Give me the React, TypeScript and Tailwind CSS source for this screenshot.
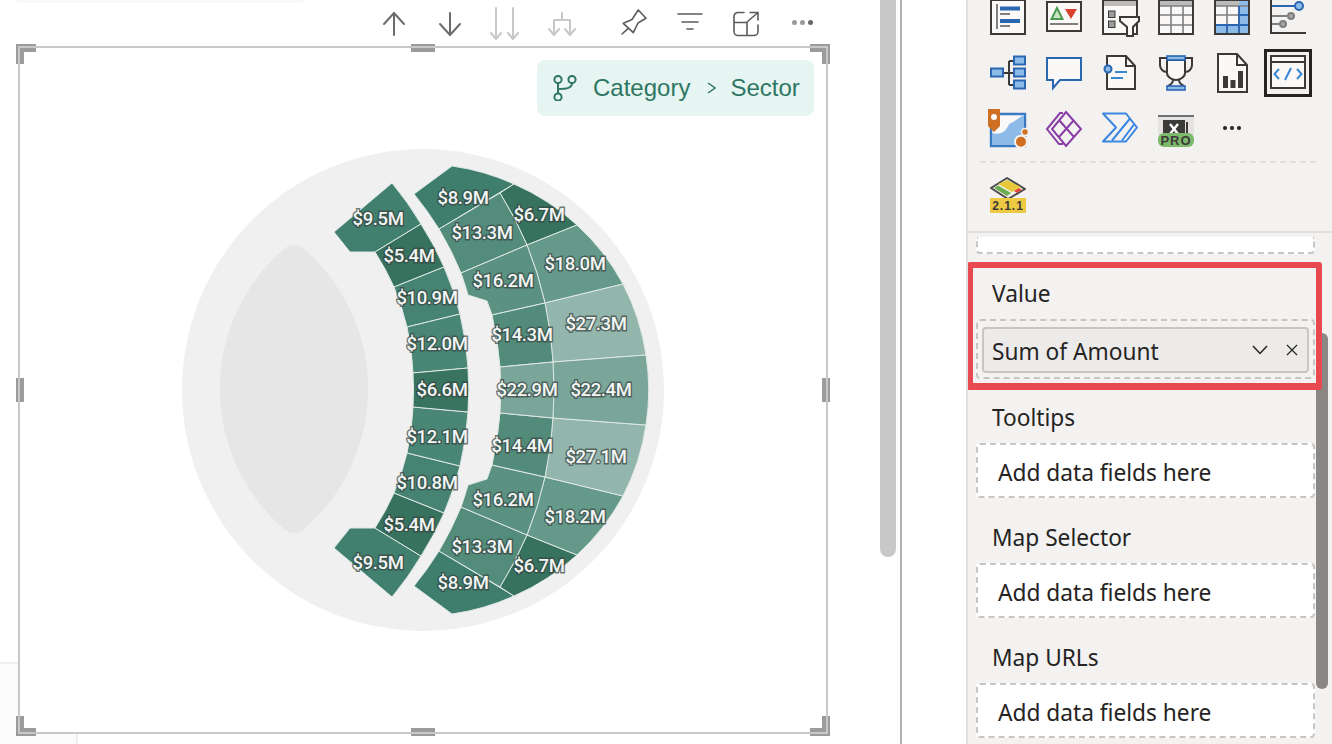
const SANS = 'font-["Noto_Sans",sans-serif]';

type Segment = { d: string; fill: string };

// top half of the chart, the lower half is the same paths mirrored around y=390
const mirrored: Segment[] = [
  { d: 'M414 194 L452 166 A226 226 0 0 1 514 184 L439 229 A328 328 0 0 0 414 194 Z', fill: '#3f7d6c' },
  { d: 'M500 193 L514 184 A226 226 0 0 1 577 225 L527 245 A386 386 0 0 0 500 193 Z', fill: '#37725f' },
  { d: 'M439 229 L500 193 A386 386 0 0 1 527 245 L461 273 A328 328 0 0 0 439 229 Z', fill: '#548c7c' },
  { d: 'M527 245 L577 225 A226 226 0 0 1 623 284 L545 303 A386 386 0 0 0 527 245 Z', fill: '#659a8b' },
  { d: 'M461 273 L527 245 A386 386 0 0 1 545 303 L492 315 L487 301 L468 295 A328 328 0 0 0 461 273 Z', fill: '#5a9181' },
  { d: 'M545 303 L623 284 A226 226 0 0 1 646 355 L553 362 A386 386 0 0 0 545 303 Z', fill: '#92b5ac' },
  { d: 'M492 315 L545 303 A386 386 0 0 1 553 362 L500 367 A350 350 0 0 0 492 315 Z', fill: '#528b7a' },
  { d: 'M334 232 L392 183 A317 317 0 0 1 421 224 L375 252 L350 252 Z', fill: '#417f6e' },
  { d: 'M375 252 L421 224 A317 317 0 0 1 444 267 L394 287 A264 264 0 0 0 375 252 Z', fill: '#37725f' },
  { d: 'M394 287 L444 267 A317 317 0 0 1 460 314 L407 327 A264 264 0 0 0 394 287 Z', fill: '#468372' },
  { d: 'M407 327 L460 314 A317 317 0 0 1 468 368 L413 373 A264 264 0 0 0 407 327 Z', fill: '#4a8675' },
];

const middle: Segment[] = [
  { d: 'M553 362 L646 355 A226 226 0 0 1 646 425 L553 418 A386 386 0 0 1 553 362 Z', fill: '#7aa69a' },
  { d: 'M500 367 L553 362 A386 386 0 0 1 553 418 L500 413 A350 350 0 0 0 500 367 Z', fill: '#7aa69a' },
  { d: 'M413 373 L468 368 A317 317 0 0 1 468 412 L413 407 A264 264 0 0 0 413 373 Z', fill: '#38745f' },
];

const labels: [string, number, number][] = [
  ['$8.9M', 463, 197], ['$6.7M', 539, 214], ['$13.3M', 482, 232], ['$18.0M', 575, 263],
  ['$16.2M', 503, 280], ['$27.3M', 596, 323], ['$14.3M', 522, 334], ['$22.9M', 527, 389],
  ['$22.4M', 601, 389], ['$14.4M', 522, 445], ['$27.1M', 596, 456], ['$16.2M', 503, 499],
  ['$18.2M', 575, 516], ['$13.3M', 482, 546], ['$6.7M', 539, 565], ['$8.9M', 463, 582],
  ['$9.5M', 378, 218], ['$5.4M', 409, 255], ['$10.9M', 427, 297], ['$12.0M', 437, 343],
  ['$6.6M', 442, 389], ['$12.1M', 437, 436], ['$10.8M', 427, 482], ['$5.4M', 409, 524],
  ['$9.5M', 378, 562],
];

const Chart = () => (
  <svg viewBox="182 149 482 482" className="mx-auto mt-[33px] h-[482px] w-[482px]">
    <circle cx="423" cy="390" r="241" fill="#f0f0f0" />
    <path
      d="M294 260 A170.5 170.5 0 0 1 294 518 A170.5 170.5 0 0 1 294 260 Z"
      fill="#e6e6e6"
      stroke="#e6e6e6"
      strokeWidth="30"
      strokeLinejoin="round"
    />
    <g stroke="#dfe9e6" strokeWidth="1">
      {mirrored.map((s) => (
        <path key={s.d} d={s.d} fill={s.fill} />
      ))}
      <g transform="matrix(1 0 0 -1 0 780)">
        {mirrored.map((s) => (
          <path key={s.d} d={s.d} fill={s.fill} />
        ))}
      </g>
      {middle.map((s) => (
        <path key={s.d} d={s.d} fill={s.fill} />
      ))}
    </g>
    {labels.map(([text, x, y]) => (
      <text
        key={`${text}-${x}-${y}`}
        x={x}
        y={y + 0.5}
        textAnchor="middle"
        dominantBaseline="central"
        fill="#f2f5f4"
        stroke="#36423e"
        strokeWidth="2.8"
        strokeOpacity="0.7"
        className='font-["Roboto",sans-serif] text-[18.5px] font-medium tracking-[-0.4px] [paint-order:stroke]'
      >
        {text}
      </text>
    ))}
  </svg>
);

const ToolIcon = ({ children, stroke = '#6b6b6b', width = 2 }: { children: React.ReactNode; stroke?: string; width?: number }) => (
  <div className="flex h-full w-14 items-center justify-center">
    <svg
      width="28"
      height="28"
      viewBox="0 0 28 28"
      fill="none"
      stroke={stroke}
      strokeWidth={width}
      strokeLinecap="round"
      strokeLinejoin="round"
      className="overflow-visible"
    >
      {children}
    </svg>
  </div>
);

const Toolbar = () => (
  <div className="flex h-[44px] pl-[366px]">
    <ToolIcon>
      <path d="M14 27V5M4 16L14 5L24 16" />
    </ToolIcon>
    <ToolIcon>
      <path d="M14 5V27M4 16L14 27L24 16" />
    </ToolIcon>
    <ToolIcon stroke="#c8c8c8">
      <path d="M4 0V31M21 0V31M-1 25L4 31L9 25M16 25L21 31L26 25" />
    </ToolIcon>
    <ToolIcon stroke="#c8c8c8">
      <path d="M14 5V12M6 27V12H22V27M1 21L6 27L11 21M17 21L22 27L27 21" />
    </ToolIcon>
    <div className="w-4" />
    <ToolIcon stroke="#5c5c5c" width={1.6}>
      <path d="M18.3 2L26 10.3L18 15L13.3 24.7L3.3 15.3L12 11.5ZM8.3 20.3L2 26" />
    </ToolIcon>
    <ToolIcon stroke="#5c5c5c" width={1.6}>
      <path d="M2 6H26M6 14H22M11 21H17" />
    </ToolIcon>
    <ToolIcon stroke="#5c5c5c" width={1.6}>
      <path d="M12 4.5H6A4 4 0 0 0 2 8.5V23.5A4 4 0 0 0 6 27.5H22A4 4 0 0 0 26 23.5V17M2 14.5H15V27.5M15 14L26 4.5M18 4.5H26V12" />
    </ToolIcon>
    <div className="flex h-full w-14 items-center justify-center gap-[3px]">
      <span className="h-[5px] w-[5px] rounded-full bg-[#9a9a9a]" />
      <span className="h-[5px] w-[5px] rounded-full bg-[#9a9a9a]" />
      <span className="h-[5px] w-[5px] rounded-full bg-[#666666]" />
    </div>
  </div>
);

const Breadcrumb = () => (
  <div className="ml-auto mr-[12px] mt-[12px] flex h-[56px] w-[277px] items-center rounded-[8px] bg-[#e6f5f1] pl-[16px] text-[24px] text-[#2f7764] font-['Liberation_Sans',sans-serif]">
    <svg width="26" height="26" viewBox="0 0 26 26" fill="none" stroke="#2f7764" strokeWidth="2">
      <circle cx="5" cy="4.5" r="3.6" />
      <circle cx="19" cy="4.5" r="3.6" />
      <circle cx="5" cy="22" r="3.6" />
      <path d="M5 8V18.4M19 8C19 13 14 14 5 14" />
    </svg>
    <span className="ml-[14px]">Category</span>
    <svg width="9" height="12" viewBox="0 0 9 12" fill="none" stroke="#2f7764" strokeWidth="1.5" className="ml-[17px]">
      <path d="M1 1L8 6L1 11" />
    </svg>
    <span className="ml-[14px]">Sector</span>
  </div>
);

const Handle = ({ className }: { className: string }) => (
  <div className={`absolute bg-[#9b9b9b] ${className}`} />
);

const Corners = () => (
  <>
    <Handle className="left-[-4px] top-[-4px] h-[8px] w-[20px]" />
    <Handle className="left-[-4px] top-[-4px] h-[20px] w-[8px]" />
    <Handle className="right-[-4px] top-[-4px] h-[8px] w-[20px]" />
    <Handle className="right-[-4px] top-[-4px] h-[20px] w-[8px]" />
    <Handle className="bottom-[-4px] left-[-4px] h-[8px] w-[20px]" />
    <Handle className="bottom-[-4px] left-[-4px] h-[20px] w-[8px]" />
    <Handle className="bottom-[-4px] right-[-4px] h-[8px] w-[20px]" />
    <Handle className="bottom-[-4px] right-[-4px] h-[20px] w-[8px]" />
    <Handle className="left-[391px] top-[-4px] h-[8px] w-[24px]" />
    <Handle className="bottom-[-4px] left-[391px] h-[8px] w-[24px]" />
    <Handle className="left-[-4px] top-[330px] h-[24px] w-[8px]" />
    <Handle className="right-[-4px] top-[330px] h-[24px] w-[8px]" />
    {/* frame line runs over the handles */}
    <div className="absolute -inset-[2px] border-2 border-[#c8c8c8]" />
  </>
);

const DK = '#3b3a39';
const BL = '#2b66b0';
const LB = '#8dbbe8';
const WH = '#faf9f8';
const GR = '#7f7f7f';

const Icon = ({ children }: { children: React.ReactNode }) => (
  <svg width="36" height="36" viewBox="0 0 36 36" className="overflow-visible">
    {children}
  </svg>
);

const Grid = ({ matrix }: { matrix?: boolean }) => (
  <Icon>
    <rect x="1" y="1" width="34" height="34" fill={WH} stroke={DK} strokeWidth="2" />
    <rect x="2" y="2" width="32" height="5" fill="#bdbbb9" />
    {matrix && <path d="M25 2H34V34H2V26H25Z" fill={LB} />}
    <path d="M13 7V34M25 7V34M2 7H34M2 16H34M2 26H34" stroke={GR} strokeWidth="1.6" fill="none" />
    {matrix && <path d="M25 7V34M13 26V34M25 16H34M2 26H34" stroke={BL} strokeWidth="1.8" fill="none" />}
    <rect x="1" y="1" width="34" height="34" fill="none" stroke={DK} strokeWidth="2" />
  </Icon>
);

const icons = [
  <Icon key="list">
    <rect x="1" y="1" width="34" height="34" fill={WH} stroke={DK} strokeWidth="2" />
    <path d="M7 5V30" stroke={GR} strokeWidth="2" />
    <path d="M10 9.5H30M10 22H30" stroke={BL} strokeWidth="4" />
    <path d="M10 15H20M10 27H20" stroke={GR} strokeWidth="2" />
  </Icon>,
  <Icon key="kpi">
    <rect x="1" y="3" width="34" height="29" fill={WH} stroke={DK} strokeWidth="2" />
    <path d="M11 9L5.5 20H16.5Z" fill="#cfe3c8" stroke="#4c9a50" strokeWidth="2" />
    <path d="M19 10H31L25 20Z" fill="#d8402c" />
    <path d="M4 25H32" stroke={GR} strokeWidth="2" />
  </Icon>,
  <Icon key="slicer">
    <rect x="1" y="1" width="34" height="34" fill={WH} stroke={DK} strokeWidth="2" />
    <rect x="2" y="2" width="32" height="5" fill="#bdbbb9" />
    <rect x="6.5" y="12" width="6.5" height="6.5" fill="#9b9b9b" stroke={DK} strokeWidth="1" />
    <rect x="6.5" y="22" width="6.5" height="6.5" fill="#9b9b9b" stroke={DK} strokeWidth="1" />
    <path d="M18 18H37V22L31 28V37H25V28L18 22Z" fill={WH} stroke={DK} strokeWidth="2" />
  </Icon>,
  <Grid key="table" />,
  <Grid key="matrix" matrix />,
  <Icon key="lines">
    <path d="M1 0V34H36" fill="none" stroke={DK} strokeWidth="2" />
    <path d="M2 7H28" stroke={BL} strokeWidth="2" />
    <circle cx="29" cy="7" r="4" fill={LB} stroke={BL} strokeWidth="2" />
    <path d="M2 17H20" stroke={GR} strokeWidth="2" />
    <circle cx="21" cy="17" r="3" fill="#a6a6a6" stroke={GR} strokeWidth="2" />
    <path d="M2 25H12" stroke={GR} strokeWidth="2" />
    <circle cx="13" cy="25" r="3" fill="#a6a6a6" stroke={GR} strokeWidth="2" />
  </Icon>,
  <Icon key="tree">
    <path d="M13 18H19M19 6V30M19 6H24M19 18H24M19 30H24" fill="none" stroke={DK} strokeWidth="2" />
    <rect x="1" y="13.5" width="12" height="8" fill={LB} stroke={BL} strokeWidth="2" />
    <rect x="24" y="1.5" width="11" height="8" fill={LB} stroke={BL} strokeWidth="2" />
    <rect x="24" y="13.5" width="11" height="8" fill={LB} stroke={BL} strokeWidth="2" />
    <rect x="24" y="25.5" width="11" height="8" fill={LB} stroke={BL} strokeWidth="2" />
  </Icon>,
  <Icon key="chat">
    <path d="M1 3H35V25H14L7 33V25H1Z" fill={WH} stroke={BL} strokeWidth="2" />
  </Icon>,
  <Icon key="narrative">
    <path d="M5 4V34H33V12L24 1H5" fill={WH} />
    <path d="M5 13V1H24L33 11V34H5V17M24 1V11H33" fill="none" stroke={DK} strokeWidth="2" />
    <circle cx="6" cy="14" r="3.5" fill={LB} stroke={BL} strokeWidth="2" />
    <path d="M13 17H25M9 23H21" stroke="#3a86d0" strokeWidth="2" />
  </Icon>,
  <Icon key="trophy">
    <path d="M9 3H2V10C2 14 5 17 9 17M27 3H34V10C34 14 31 17 27 17" fill="none" stroke={DK} strokeWidth="2" />
    <path d="M9 5V18C9 22 14 25 18 25C22 25 27 22 27 18V5Z" fill={WH} stroke={DK} strokeWidth="2" />
    <path d="M15 25C15 28 12 30 10 31M21 25C21 28 24 30 26 31" fill="none" stroke={DK} strokeWidth="2" />
    <rect x="9" y="1" width="18" height="4" fill={LB} stroke={BL} strokeWidth="1.6" />
    <rect x="9" y="31" width="18" height="4" fill={LB} stroke={BL} strokeWidth="1.6" />
  </Icon>,
  <Icon key="paginated">
    <path d="M4 -1H23L33 10V37H4Z" fill={WH} stroke={DK} strokeWidth="2" />
    <path d="M23 -1V10H33" fill="none" stroke={DK} strokeWidth="2" />
    <rect x="9" y="21" width="5" height="12" fill={DK} />
    <rect x="16.5" y="25" width="5" height="8" fill={DK} />
    <rect x="24" y="16" width="5" height="17" fill={DK} />
  </Icon>,
  <div key="html" className="relative h-9 w-9">
    <div className="absolute -inset-[6px] border-[3px] border-[#252423]" />
    <Icon>
      <rect x="1" y="1" width="34" height="32" fill={WH} stroke={DK} strokeWidth="2" />
      <path d="M1 7H35" stroke={DK} strokeWidth="2" />
      <path d="M9 14L4.5 19L9 24M27 14L31.5 19L27 24M21 13L15 25" fill="none" stroke="#3a86d0" strokeWidth="2" />
    </Icon>
  </div>,
  <Icon key="map">
    <path d="M1 3H35V35H1Z" fill={WH} stroke="#3a7ac2" strokeWidth="2.4" />
    <path d="M2 22C8 24 14 22 17 17C19 13 20 12 23 11L32 5H34V34H2Z" fill="#8dbbe8" />
    <circle cx="31" cy="30.7" r="6" fill="#cf6f22" stroke="#f3f2f1" strokeWidth="2" />
    <circle cx="35" cy="21" r="3.5" fill="#cf6f22" stroke="#f3f2f1" strokeWidth="1.6" />
    <path d="M-2 -2H10V15L4 21L-2 15Z" fill="#cf6f22" />
    <circle cx="4" cy="6" r="3" fill={WH} />
  </Icon>,
  <Icon key="apps">
    <g fill="none" stroke="#8a3ea5" strokeWidth="2">
      <path d="M17 2H14L1 18L13 33H17" />
      <path d="M20 1L35 18L20 35L6 18Z" />
      <path d="M13 9L28 26M28 9L13 26" />
    </g>
  </Icon>,
  <Icon key="automate">
    <g fill="none" stroke="#3a86e0" strokeWidth="2" strokeLinejoin="round" transform="translate(0 1.5)">
      <path d="M1 1H24L35 15L24 29H1L14 15Z" />
      <path d="M10 28L28 6M20 28L32 12" />
    </g>
  </Icon>,
  <Icon key="pro">
    <rect x="0" y="4" width="36" height="20" fill="#e4e3e2" />
    <rect x="0" y="4" width="36" height="2" fill="#6f6f6f" />
    <rect x="5" y="9" width="22" height="15" fill="#3b3a39" />
    <path d="M12 13L20 23M20 13L12 23" stroke="#fff" strokeWidth="2.4" />
    <path d="M29 11V22" stroke={DK} strokeWidth="2" />
    <rect x="0" y="22" width="36" height="14" rx="6" fill="#7cb96b" />
    <text x="18" y="34" textAnchor="middle" fill="#3b3a39" className='font-["Liberation_Sans",sans-serif] text-[13px] font-bold tracking-[1px]'>
      PRO
    </text>
  </Icon>,
  <div key="more" className="flex h-9 w-9 items-center justify-center gap-[3px] pb-[2px]">
    <span className="h-[4px] w-[4px] rounded-full bg-[#252423]" />
    <span className="h-[4px] w-[4px] rounded-full bg-[#252423]" />
    <span className="h-[4px] w-[4px] rounded-full bg-[#252423]" />
  </div>,
];

const LayersIcon = () => (
  <Icon>
    <path d="M17 1L35 12L18 22L1 11Z" fill="#f3f2f1" stroke="#4a4a4a" strokeWidth="2" strokeLinejoin="round" />
    <path d="M17 3L31 10L22 15L8 7Z" fill="#e8c93c" />
    <path d="M4 11L8 8.5L21 16L17 19Z" fill="#6cae4f" />
    <path d="M24 14L29 11L32 13L27 16Z" fill="#e0463c" />
    <rect x="0" y="21" width="36" height="15" fill="#eeca42" />
    <text x="18" y="33" textAnchor="middle" fill="#3b3a39" className='font-["Liberation_Sans",sans-serif] text-[12px] font-bold tracking-[1px]'>
      2.1.1
    </text>
  </Icon>
);

const Well = () => (
  <div className="ml-[8px] mt-[10px] flex h-[55px] w-[339px] items-center rounded-[4px] border-2 border-dashed border-[#c8c6c4] bg-white pl-[20px] pt-[6px] text-[#252423]">
    Add data fields here
  </div>
);

const FieldLabel = ({ title, className = 'mt-[23px]' }: { title: string; className?: string }) => (
  <div className={`ml-[24px] h-[32px] pt-px leading-[32px] text-[#252423] ${className}`}>{title}</div>
);

const Panel = () => (
  <aside className={`relative h-full flex-1 overflow-hidden border-l-2 border-[#e1dfdd] bg-[#f3f2f1] text-[22.7px] ${SANS}`}>
    <div className="ml-[22px] -mt-px grid grid-cols-[repeat(6,56px)] gap-y-5">{icons}</div>
    <div className="ml-[12px] mt-[14px] w-[336px] border-t-2 border-dashed border-[#e1dfdd]" />
    <div className="ml-[22px] mt-[14px]">
      <LayersIcon />
    </div>
    <div className="mt-[18px] border-t-2 border-[#e1dfdd]" />
    <div className="ml-[8px] mt-[4px] h-[17px] w-[339px] rounded-b-[4px] border-2 border-t-0 border-dashed border-[#c8c6c4] bg-white" />

    <FieldLabel title="Value" />
    <div className="ml-[8px] mt-[10px] h-[60px] w-[339px] rounded-[4px] border-2 border-dashed border-[#c8c6c4] px-[4px] pt-[6px]">
      <div className="flex h-[46px] items-center rounded-[4px] border-2 border-[#c8c6c4] bg-[#ecebea] pl-[8px] pr-[9px] text-[#252423]">
        <span className="flex-1 pt-[4px]">Sum of Amount</span>
        <svg width="16" height="10" viewBox="0 0 16 10" fill="none" stroke="#252423" strokeWidth="1.5">
          <path d="M1 1L8 8.5L15 1" />
        </svg>
        <svg width="12" height="12" viewBox="0 0 12 12" fill="none" stroke="#252423" strokeWidth="1.2" className="ml-[18px]">
          <path d="M1 1L11 11M11 1L1 11" />
        </svg>
      </div>
    </div>

    <FieldLabel title="Tooltips" className="mt-[22px]" />
    <Well />
    <FieldLabel title="Map Selector" />
    <Well />
    <FieldLabel title="Map URLs" />
    <Well />

    <div className="absolute left-[348px] top-[333px] h-[356px] w-[12px] rounded-[6px] bg-[#8a8886]" />
    <div className="absolute left-[-1px] top-[262px] h-[128px] w-[355px] rounded-[3px] border-[6px] border-b-[7px] border-[#e8484f]" />
  </aside>
);

export default function App() {
  return (
    <div className="flex h-[744px] w-[1332px] overflow-hidden bg-white">
      <main className="relative w-[880px]">
        <div className="absolute left-[15px] top-0 h-[3px] w-[290px] rounded-b bg-[#f8f8f8]" />
        <div className="absolute bottom-0 left-0 top-[662px] w-[18px] border-t-2 border-[#eeeeee] bg-[#fbfbfb]" />
        <div className="absolute bottom-0 left-0 h-[10px] w-[78px] border-r-2 border-[#eeeeee] bg-[#fbfbfb]" />
        <Toolbar />
        <div className="relative ml-[18px] mt-[2px] h-[688px] w-[810px] border-2 border-[#c8c8c8] bg-white">
          <Breadcrumb />
          <Chart />
          <Corners />
        </div>
      </main>
      <div className="h-[557px] w-4 rounded-b-lg bg-[#c8c8c8]" />
      <div className="ml-[4px] h-full w-[2px] bg-[#b3b0ad]" />
      <div className="h-full w-[64px]" />
      <Panel />
    </div>
  );
}
